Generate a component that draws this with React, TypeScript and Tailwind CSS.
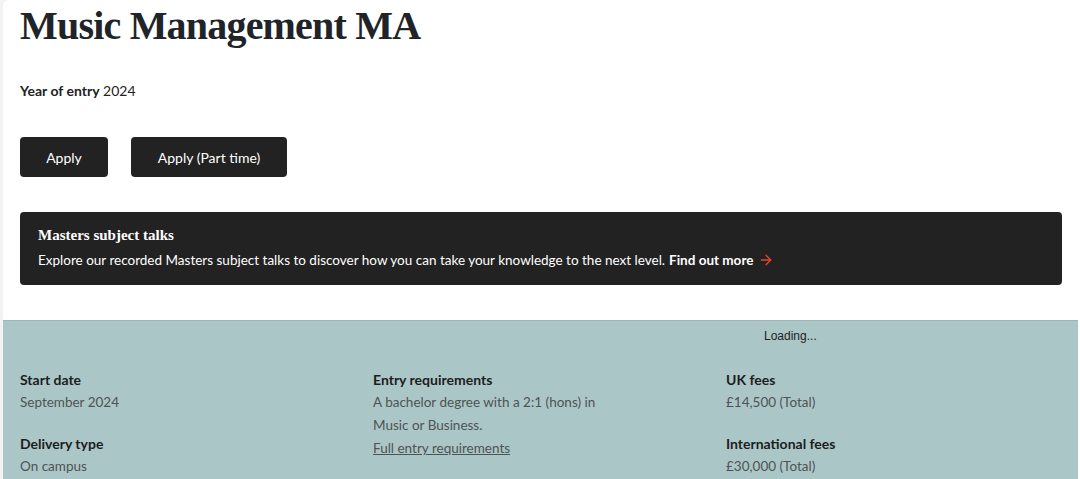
import { ArrowRight } from "lucide-react";

const sans = "font-['Lato','Open_Sans',sans-serif]";

const Fact = ({ label, children }: { label: string; children: React.ReactNode }) => (
  <div className="flex flex-col">
    <span className="text-[14px] font-bold leading-[23px] text-[#1d1d1d]">{label}</span>
    <div className="text-[13.5px] leading-[23px] text-[#4f5354]">{children}</div>
  </div>
);

export default function App() {
  return (
    <div className={`flex min-h-[479px] bg-[#f3f3f3] pl-[3px] ${sans}`}>
      <div className="flex min-h-[479px] flex-1 flex-col rounded-tl-md bg-white">
        <div className="px-[17px]">
          <h1 className="pt-[2px] font-['Liberation_Serif',serif] text-[40px] font-bold leading-[48px] tracking-[-0.8px] text-[#202328]">
            Music Management MA
          </h1>
          <p className="mt-[31px] text-[14px] leading-[20px] text-[#222]">
            <span className="font-bold">Year of entry</span> 2024
          </p>
          <div className="mt-[36px] flex gap-[23px]">
            <button className="h-[40px] w-[88px] rounded-[4px] bg-[#222] text-[14px] text-white">
              Apply
            </button>
            <button className="h-[40px] w-[156px] rounded-[4px] bg-[#222] text-[14px] text-white">
              Apply (Part time)
            </button>
          </div>
          <div className="mt-[35px] mr-[1px] h-[73px] rounded-[4px] bg-[#222] px-[18px] pt-[13px]">
            <h2 className="font-['Liberation_Serif',serif] text-[15px] font-bold leading-[20px] text-white">
              Masters subject talks
            </h2>
            <p className="mt-[5px] flex items-center text-[13.5px] leading-[20px] text-white">
              Explore our recorded Masters subject talks to discover how you can take your knowledge to the next level.
              <span className="ml-[4px] font-bold">Find out more</span>
              <ArrowRight className="ml-[5px] size-4 text-[#e5472d]" strokeWidth={2} />
            </p>
          </div>
        </div>
        <section className="mt-[35px] mr-[2px] flex-1 border-t border-[#9db7b8] bg-[#abc6c7] px-[17px]">
          <p className="pl-[744px] pt-[7px] font-['Liberation_Sans',sans-serif] text-[12px] leading-[16px] text-[#222]">
            Loading...
          </p>
          <div className="mt-[24px] grid grid-cols-[353px_353px_1fr]">
            <div className="flex flex-col gap-[18px]">
              <Fact label="Start date">September 2024</Fact>
              <Fact label="Delivery type">On campus</Fact>
            </div>
            <div>
              <Fact label="Entry requirements">
                <p>A bachelor degree with a 2:1 (hons) in</p>
                <p>Music or Business.</p>
                <a className="underline">Full entry requirements</a>
              </Fact>
            </div>
            <div className="flex flex-col gap-[18px]">
              <Fact label="UK fees">£14,500 (Total)</Fact>
              <Fact label="International fees">£30,000 (Total)</Fact>
            </div>
          </div>
        </section>
      </div>
    </div>
  );
}
